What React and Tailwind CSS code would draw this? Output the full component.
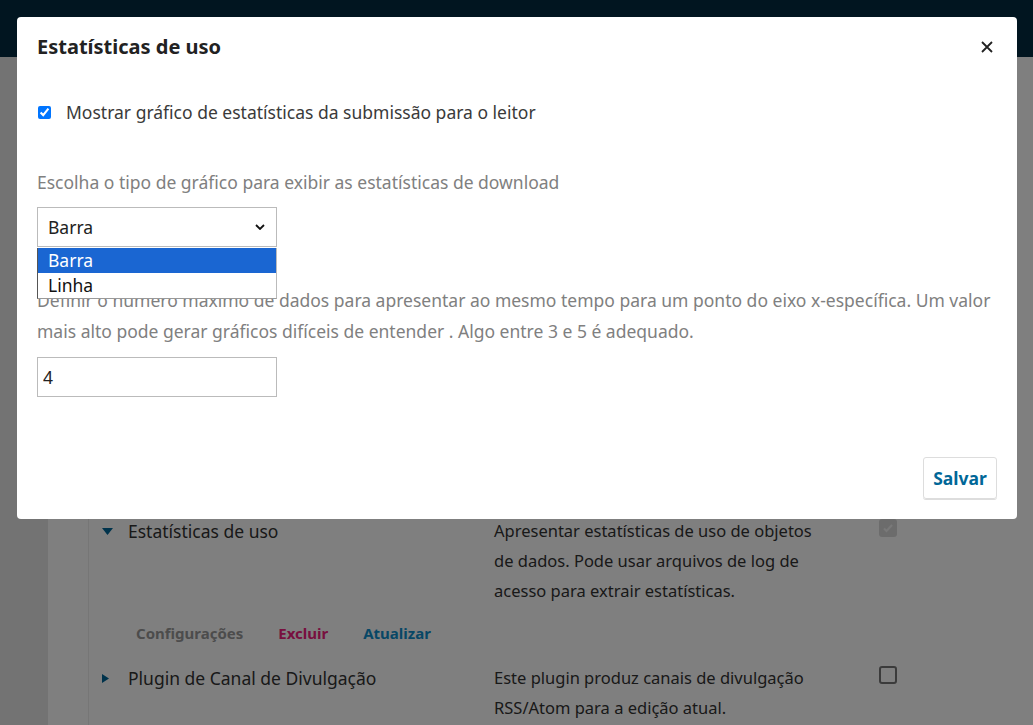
import { useState } from 'react';

const font = { fontFamily: '"Noto Sans", "Open Sans", sans-serif' };

const PluginRow = ({ open, name, desc, checked, children }) => (
  <div className="pl-[13px]">
    <div className="grid grid-cols-[392px_386px_auto]">
      <div className="flex items-start gap-[15px] text-[17.5px] leading-[30px]">
        <span className="mt-[11px] flex h-[9px] w-[11px] items-center justify-start">
          {open ? (
            <svg viewBox="0 0 11 7" className="h-[7px] w-[11px] fill-[#006798]"><path d="M0 0h11L5.5 7z" /></svg>
          ) : (
            <svg viewBox="0 0 7 9" className="h-[9px] w-[7px] fill-[#006798]"><path d="M0 0v9l7-4.5z" /></svg>
          )}
        </span>
        <span>{name}</span>
      </div>
      <div className="max-w-[330px] text-[16.5px] leading-[30px]">{desc}</div>
      <div className="-ml-[1px] pt-[3px]">
        {checked ? (
          <div className="flex h-[18px] w-[18px] items-center justify-center rounded-[3px] bg-[#d9d9d9]">
            <svg viewBox="0 0 12 12" className="h-[12px] w-[12px] fill-none stroke-[#f2f2f2] stroke-[2]"><path d="M2 6.5l2.5 2.5L10 3" /></svg>
          </div>
        ) : (
          <div className="h-[18px] w-[18px] rounded-[3px] border-2 border-[#777]" />
        )}
      </div>
    </div>
    {children}
  </div>
);

export default function App() {
  const [checked, setChecked] = useState(true);
  const [count, setCount] = useState('4');

  return (
    <div className="relative h-[725px] w-[1033px] overflow-hidden bg-white text-[17px] text-[#333]" style={font}>
      {/* page behind the modal */}
      <div className="h-[57px] bg-[#022a40]" />
      <div className="flex h-[668px]">
        <div className="w-[48px] shrink-0 bg-[#e6e6e6]" />
        <div className="flex-1 bg-white">
          <div className="ml-[40px] h-full border-l border-[#ececec] pt-[459px]">
            <PluginRow
              open
              name="Estatísticas de uso"
              desc="Apresentar estatísticas de uso de objetos de dados. Pode usar arquivos de log de acesso para extrair estatísticas."
              checked
            >
              <div className="mt-[16px] flex gap-[35px] pl-[34px] text-[15px] font-bold">
                <span className="text-[#999]">Configurações</span>
                <span className="text-[#f0207e]">Excluir</span>
                <span className="text-[#0f8fcc]">Atualizar</span>
              </div>
            </PluginRow>
            <div className="mt-[18px]">
              <PluginRow
                name="Plugin de Canal de Divulgação"
                desc="Este plugin produz canais de divulgação RSS/Atom para a edição atual."
              />
            </div>
          </div>
        </div>
      </div>

      {/* overlay */}
      <div className="absolute inset-0 bg-black/50" />

      {/* modal */}
      <div className="absolute left-[17px] top-[17px] flex h-[502px] w-[1000px] flex-col rounded-[4px] bg-white">
        <div className="flex h-[60px] items-center justify-between px-5">
          <h2 className="text-[20px] font-bold text-[#222]">Estatísticas de uso</h2>
          <button className="mr-[2px] flex h-[16px] w-[16px] items-center justify-center">
            <svg viewBox="0 0 12 12" className="h-[12px] w-[12px] fill-none stroke-[#222] stroke-[1.8]"><path d="M1 1l10 10M11 1L1 11" /></svg>
          </button>
        </div>
        <div className="px-5">
          <label className="mt-[23px] flex items-center gap-[15px] text-[17.5px] leading-[24px] text-[#3a3a3a]">
            <input
              type="checkbox"
              checked={checked}
              onChange={(e) => setChecked(e.target.checked)}
              className="ml-[1px] h-[13px] w-[13px] accent-[#0075ff]"
            />
            Mostrar gráfico de estatísticas da submissão para o leitor
          </label>

          <div className="mt-[46px] text-[17.5px] leading-[24px] text-[#808080]">
            Escolha o tipo de gráfico para exibir as estatísticas de download
          </div>
          <div className="relative mt-[13px] w-[240px]">
            <div className="flex h-[40px] items-center justify-between border border-[#bbb] pl-[10px] pr-[11px] text-[17.5px] text-[#222]">
              <span>Barra</span>
              <svg viewBox="0 0 10 6" className="h-[6px] w-[10px] fill-none stroke-[#111] stroke-[1.8]"><path d="M1 1l4 4 4-4" /></svg>
            </div>
            {/* open option list */}
            <div className="absolute left-0 top-[41px] z-10 w-[240px] border-b border-l border-r border-b-[#999] border-l-[#555] border-r-[#bbb] bg-white text-[17.5px] leading-[25px]">
              <div className="bg-[#1a66d2] pl-[10px] text-white">Barra</div>
              <div className="pl-[10px] text-[#111]">Linha</div>
            </div>
          </div>

          <p className="mt-[38px] text-[17.5px] leading-[31px] text-[#808080]">
            Definir o número máximo de dados para apresentar ao mesmo tempo para um ponto do eixo x-específica. Um valor mais alto pode gerar gráficos difíceis de entender . Algo entre 3 e 5 é adequado.
          </p>
          <input
            type="text"
            value={count}
            onChange={(e) => setCount(e.target.value)}
            className="mt-[10px] h-[40px] w-[240px] border border-[#bbb] px-[5px] text-[17.5px] text-[#222] outline-none"
          />
        </div>
        <div className="mt-auto flex justify-end px-5 pb-5">
          <button className="h-[42px] w-[74px] rounded-[3px] border border-[#ddd] text-[17.5px] font-bold text-[#006798] shadow-[0_1px_0_#ddd]">
            Salvar
          </button>
        </div>
      </div>
    </div>
  );
}
